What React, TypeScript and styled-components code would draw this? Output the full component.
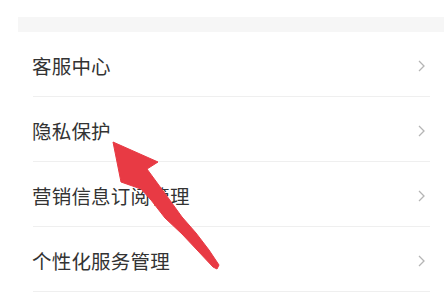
import styled, { createGlobalStyle } from 'styled-components';

const GlobalStyle = createGlobalStyle`
  html, body {
    margin: 0;
    padding: 0;
    background: #ffffff;
  }
  body {
    font-family: "Noto Sans CJK SC", "Noto Sans", sans-serif;
  }
`;

const items = ['客服中心', '隐私保护', '营销信息订阅管理', '个性化服务管理'];

// red annotation arrow drawn over the list
const arrowPoints = [
  '113,142',
  '158,162',
  '147,169',
  '169,199',
  '182,217',
  '196,233',
  '209,250',
  '219,265',
  '217,269',
  '213,267',
  '198,251',
  '182,234',
  '165,218',
  '151,200',
  '141,189',
  '121,182',
].join(' ');

const App = () => {
  return (
    <Page>
      <GlobalStyle />
      <TopSpace />
      <Band />
      <List>
        {items.map((t) => (
          <Row key={t}>
            <Label>{t}</Label>
            <Chevron viewBox="0 0 7 12" aria-hidden>
              <polyline points="1,1 6,6 1,11" />
            </Chevron>
          </Row>
        ))}
      </List>
      <Arrow viewBox="0 0 444 301" aria-hidden>
        <polygon points={arrowPoints} />
      </Arrow>
    </Page>
  );
};

export default App;

const Page = styled.div`
  position: relative;
  width: 444px;
  height: 301px;
  overflow: hidden;
  background: #fff;
`;

const TopSpace = styled.div`
  height: 17px;
`;

const Band = styled.div`
  height: 15px;
  margin-left: 18px;
  background: #f6f6f6;
`;

const List = styled.div`
  display: flex;
  flex-direction: column;
`;

const Row = styled.div`
  height: 65px;
  margin: 0 14px 0 33px;
  padding: 3px 5px 0 0;
  border-bottom: 1px solid #efefef;
  box-sizing: border-box;
  display: flex;
  align-items: center;
  justify-content: space-between;
`;

const Label = styled.span`
  font-size: 19.5px;
  color: #333333;
  margin-left: -1px;
  letter-spacing: 0.2px;
`;

const Chevron = styled.svg`
  width: 7px;
  height: 12px;
  fill: none;
  stroke: #b5b5b5;
  stroke-width: 1.3;
`;

const Arrow = styled.svg`
  position: absolute;
  left: 0;
  top: 0;
  width: 444px;
  height: 301px;
  fill: #e83a44;
  stroke: #e83a44;
  stroke-width: 1;
  stroke-linejoin: round;
  pointer-events: none;
`;
